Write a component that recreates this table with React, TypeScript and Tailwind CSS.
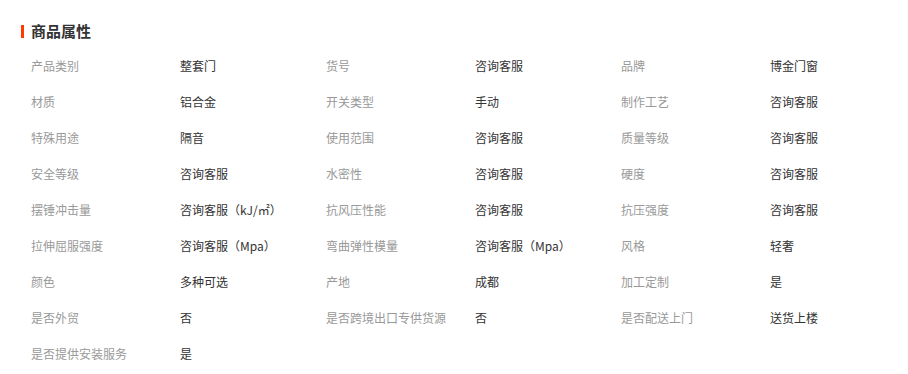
const attrs: [string, string][] = [
  ['产品类别', '整套门'],
  ['货号', '咨询客服'],
  ['品牌', '博金门窗'],
  ['材质', '铝合金'],
  ['开关类型', '手动'],
  ['制作工艺', '咨询客服'],
  ['特殊用途', '隔音'],
  ['使用范围', '咨询客服'],
  ['质量等级', '咨询客服'],
  ['安全等级', '咨询客服'],
  ['水密性', '咨询客服'],
  ['硬度', '咨询客服'],
  ['摆锤冲击量', '咨询客服（kJ/㎡）'],
  ['抗风压性能', '咨询客服'],
  ['抗压强度', '咨询客服'],
  ['拉伸屈服强度', '咨询客服（Mpa）'],
  ['弯曲弹性模量', '咨询客服（Mpa）'],
  ['风格', '轻奢'],
  ['颜色', '多种可选'],
  ['产地', '成都'],
  ['加工定制', '是'],
  ['是否外贸', '否'],
  ['是否跨境出口专供货源', '否'],
  ['是否配送上门', '送货上楼'],
  ['是否提供安装服务', '是'],
];

export default function App() {
  return (
    <div className="w-[908px] h-[374px] overflow-hidden bg-white pt-[21px] pl-[21px] font-['Noto_Sans_CJK_SC','Noto_Sans',sans-serif]">
      {/* 标题 */}
      <div className="flex items-center h-5">
        <span className="w-[3px] h-[13px] bg-[#ff3c00]" />
        <span className="ml-[7px] text-[15px] font-bold text-[#333]">商品属性</span>
      </div>

      {/* 属性列表 */}
      <div className="mt-[7px] pl-[10px] grid grid-cols-[149px_146px_149px_146px_149px_146px]">
        {attrs.map(([label, value]) => (
          <div key={label} className="contents">
            <div className="h-9 flex items-center text-xs text-[#999] whitespace-nowrap">{label}</div>
            <div className="h-9 flex items-center text-xs text-[#333] whitespace-nowrap">{value}</div>
          </div>
        ))}
      </div>
    </div>
  );
}
